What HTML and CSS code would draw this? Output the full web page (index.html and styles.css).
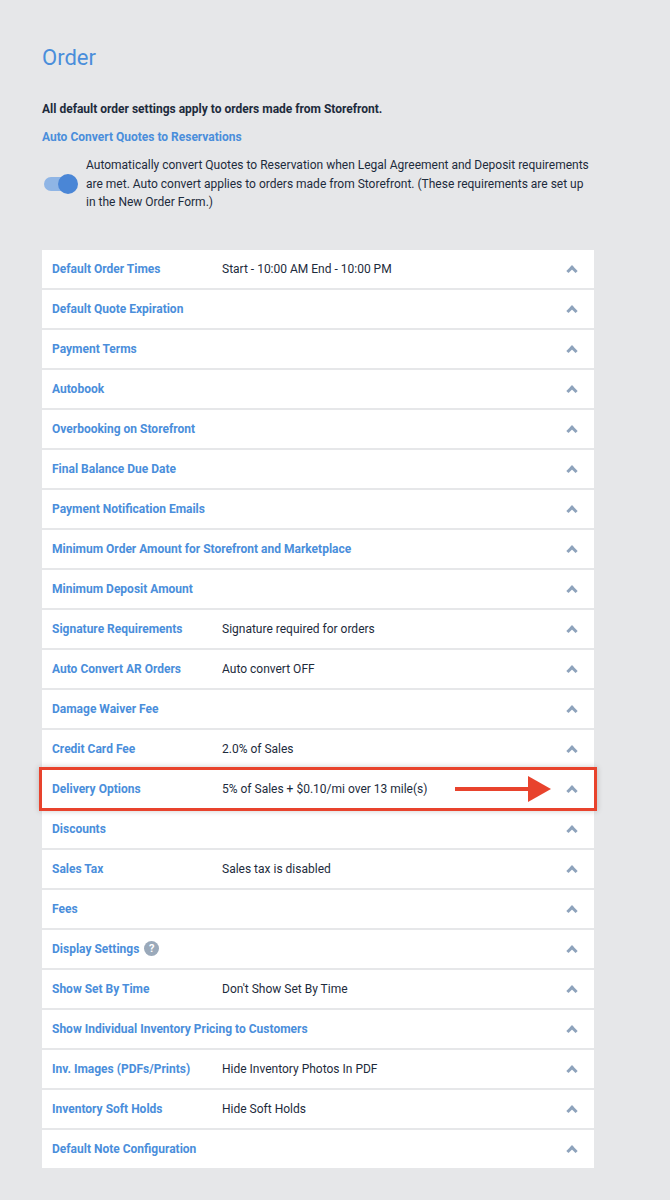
FILE: index.html
```
<!DOCTYPE html>
<html lang="en">
<head>
    <meta charset="UTF-8">
    <meta name="viewport" content="width=device-width, initial-scale=1.0">
    <title>Order Settings</title>
    <link rel="stylesheet" href="styles.css">
</head>
<body>
    <div class="page">
        <h1 class="page-title">Order</h1>
        <p class="note">All default order settings apply to orders made from Storefront.</p>

        <div class="setting">
            <a class="setting-link" href="#">Auto Convert Quotes to Reservations</a>
            <div class="toggle-row">
                <span class="toggle on"><span class="knob"></span></span>
                <p>Automatically convert Quotes to Reservation when Legal Agreement and Deposit requirements are met. Auto convert applies to orders made from Storefront. (These requirements are set up in the New Order Form.)</p>
            </div>
        </div>

        <ul class="panels">
            <li class="panel"><span class="label">Default Order Times</span><span class="value">Start - 10:00 AM End - 10:00 PM</span><span class="chev"></span></li>
            <li class="panel"><span class="label">Default Quote Expiration</span><span class="value"></span><span class="chev"></span></li>
            <li class="panel"><span class="label">Payment Terms</span><span class="value"></span><span class="chev"></span></li>
            <li class="panel"><span class="label">Autobook</span><span class="value"></span><span class="chev"></span></li>
            <li class="panel"><span class="label">Overbooking on Storefront</span><span class="value"></span><span class="chev"></span></li>
            <li class="panel"><span class="label">Final Balance Due Date</span><span class="value"></span><span class="chev"></span></li>
            <li class="panel"><span class="label">Payment Notification Emails</span><span class="value"></span><span class="chev"></span></li>
            <li class="panel"><span class="label wide">Minimum Order Amount for Storefront and Marketplace</span><span class="chev"></span></li>
            <li class="panel"><span class="label">Minimum Deposit Amount</span><span class="value"></span><span class="chev"></span></li>
            <li class="panel"><span class="label">Signature Requirements</span><span class="value">Signature required for orders</span><span class="chev"></span></li>
            <li class="panel"><span class="label">Auto Convert AR Orders</span><span class="value">Auto convert OFF</span><span class="chev"></span></li>
            <li class="panel"><span class="label">Damage Waiver Fee</span><span class="value"></span><span class="chev"></span></li>
            <li class="panel"><span class="label">Credit Card Fee</span><span class="value">2.0% of Sales</span><span class="chev"></span></li>
            <li class="panel highlight">
                <span class="label">Delivery Options</span><span class="value">5% of Sales + $0.10/mi over 13 mile(s)</span><span class="chev"></span>
                <span class="arrow"><span class="shaft"></span><span class="head"></span></span>
            </li>
            <li class="panel"><span class="label">Discounts</span><span class="value"></span><span class="chev"></span></li>
            <li class="panel"><span class="label">Sales Tax</span><span class="value">Sales tax is disabled</span><span class="chev"></span></li>
            <li class="panel"><span class="label">Fees</span><span class="value"></span><span class="chev"></span></li>
            <li class="panel"><span class="label">Display Settings <span class="help">?</span></span><span class="value"></span><span class="chev"></span></li>
            <li class="panel"><span class="label">Show Set By Time</span><span class="value">Don't Show Set By Time</span><span class="chev"></span></li>
            <li class="panel"><span class="label wide">Show Individual Inventory Pricing to Customers</span><span class="chev"></span></li>
            <li class="panel"><span class="label">Inv. Images (PDFs/Prints)</span><span class="value">Hide Inventory Photos In PDF</span><span class="chev"></span></li>
            <li class="panel"><span class="label">Inventory Soft Holds</span><span class="value">Hide Soft Holds</span><span class="chev"></span></li>
            <li class="panel"><span class="label">Default Note Configuration</span><span class="value"></span><span class="chev"></span></li>
        </ul>
    </div>
</body>
</html>
```

FILE: styles.css
```
body {
    margin: 0;
    background: #e6e7e9;
    font-family: Roboto, "Liberation Sans", Arial, sans-serif;
    color: #1d2b3c;
    font-size: 12px;
}
.page {
    width: 552px;
    padding: 43px 0 33px 42px;
}
.page-title {
    margin: 0 0 28px;
    font-size: 22px;
    font-weight: 400;
    line-height: 30px;
    color: #4a8edb;
}
.note {
    margin: 0 0 12px;
    font-weight: 700;
    line-height: 16px;
}
.setting-link {
    display: block;
    color: #4a8edb;
    font-weight: 700;
    text-decoration: none;
    line-height: 16px;
    margin-bottom: 11px;
}
.toggle-row {
    display: flex;
    align-items: center;
    gap: 8px;
}
.toggle-row p {
    margin: 0;
    line-height: 18.5px;
    width: 510px;
}
.toggle {
    position: relative;
    flex: none;
    width: 34px;
    height: 20px;
    margin-left: 2px;
}
.toggle::before {
    content: "";
    position: absolute;
    left: 0;
    top: 3px;
    width: 30px;
    height: 14px;
    border-radius: 7px;
    background: #8fb5e5;
}
.toggle .knob {
    position: absolute;
    right: 0;
    top: 0;
    width: 20px;
    height: 20px;
    border-radius: 50%;
    background: #4a86d6;
}
.panels {
    list-style: none;
    margin: 38px 0 0;
    padding: 0;
}
.panel {
    position: relative;
    display: flex;
    align-items: center;
    height: 38px;
    margin-bottom: 2px;
    padding: 0 16px 0 10px;
    background: #fff;
}
.label {
    flex: none;
    width: 170px;
    color: #4a8edb;
    font-weight: 700;
    display: flex;
    align-items: center;
    gap: 5px;
}
.label.wide {
    width: auto;
    flex: 1;
}
.value {
    flex: 1;
}
.chev {
    flex: none;
    width: 5px;
    height: 5px;
    margin-top: 4px;
    margin-right: 2px;
    border-left: 3px solid #8ea3bc;
    border-top: 3px solid #8ea3bc;
    transform: rotate(45deg);
}
.help {
    display: inline-flex;
    align-items: center;
    justify-content: center;
    width: 15px;
    height: 15px;
    border-radius: 50%;
    background: #9aa9ba;
    color: #fff;
    font-size: 11px;
    font-weight: 700;
}
.highlight {
    outline: 3px solid #e8432d;
    box-shadow: 0 0 6px 3px rgba(0,0,0,0.2);
    z-index: 1;
}
/* annotation arrow pointing at the chevron */
.arrow {
    position: absolute;
    left: 413px;
    top: 6px;
    display: flex;
    align-items: center;
    height: 26px;
}
.arrow .shaft {
    width: 73px;
    height: 4px;
    background: #e8432d;
}
.arrow .head {
    width: 0;
    height: 0;
    border-top: 13px solid transparent;
    border-bottom: 13px solid transparent;
    border-left: 23px solid #e8432d;
}
```
